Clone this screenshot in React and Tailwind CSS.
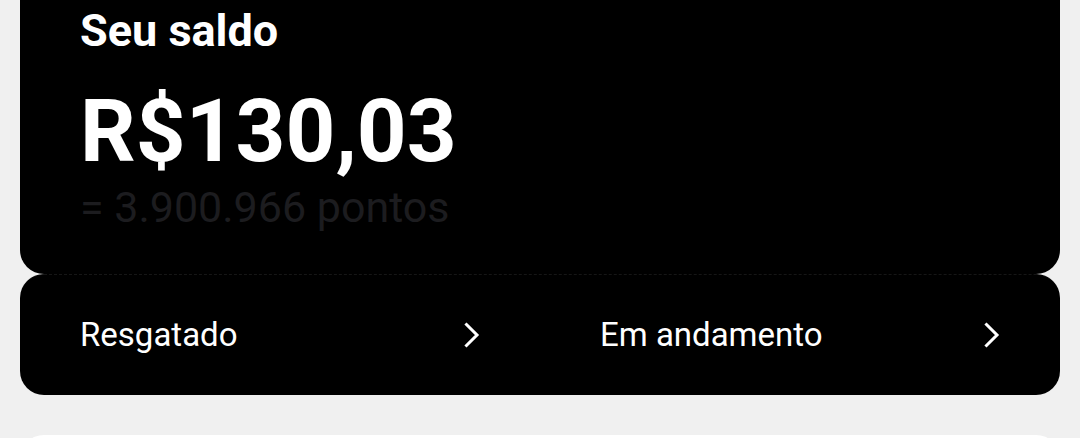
export default function App() {
  const font = { fontFamily: "Roboto, 'Noto Sans', sans-serif" };
  const Chevron = () => (
    <svg width="16" height="26" viewBox="0 0 16 26" fill="none" className="shrink-0">
      <path d="M2.5 2.5 L13 13 L2.5 23.5" stroke="white" strokeWidth="3" strokeLinecap="square" />
    </svg>
  );
  return (
    <div className="w-[1080px] h-[438px] overflow-hidden bg-[#f0f0f0]" style={font}>
      <div className="mx-[20px] bg-black rounded-b-[24px] px-[60px] pt-[9px] pb-[45px]">
        <div className="text-white font-bold text-[45px] leading-[44px]">Seu saldo</div>
        <div className="text-white font-bold text-[87px] leading-[86px] mt-[35px]">R$130,03</div>
        <div className="text-[#1c1c1f] text-[43px] leading-[43px] mt-[12px]">= 3.900.966 pontos</div>
      </div>
      <div className="mx-[20px] bg-black rounded-[24px] h-[121px] px-[60px] grid grid-cols-2 gap-[120px] items-center border-t border-dashed border-[#161616]">
        <div className="flex items-center justify-between">
          <span className="text-white text-[33px] leading-[34px]">Resgatado</span>
          <Chevron />
        </div>
        <div className="flex items-center justify-between">
          <span className="text-white text-[33px] leading-[34px]">Em andamento</span>
          <Chevron />
        </div>
      </div>
      <div className="mx-[20px] mt-[40px] bg-white rounded-[24px] h-[100px]"></div>
    </div>
  );
}
